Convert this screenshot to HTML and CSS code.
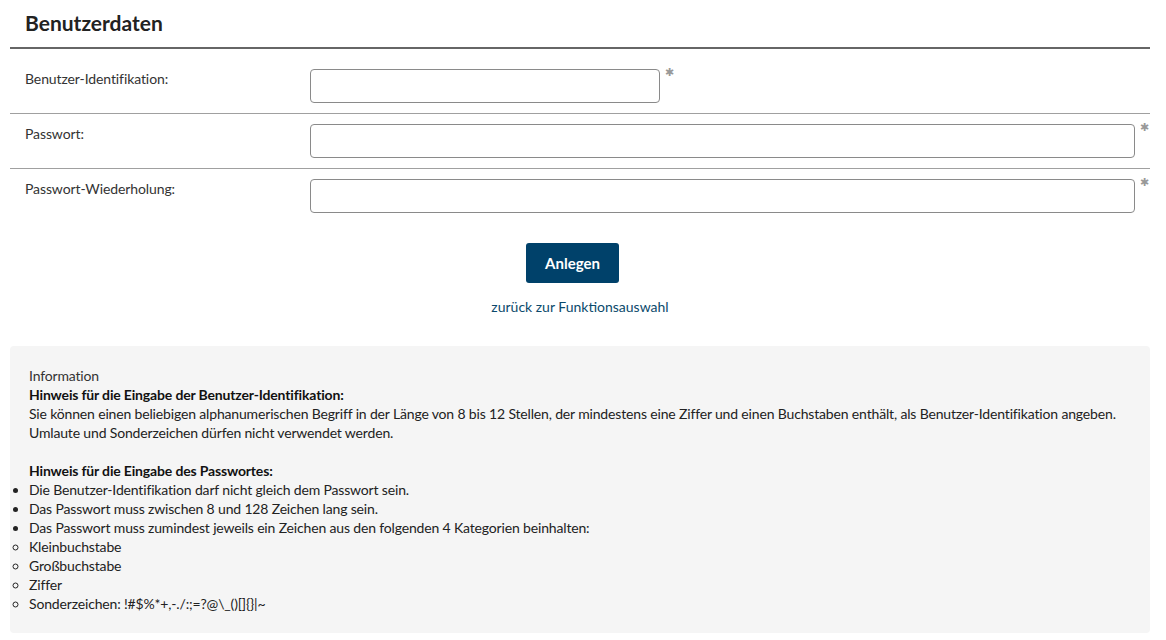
FILE: index.html
```html
<!DOCTYPE html>
<html lang="de">
<head>
  <meta charset="UTF-8">
  <title>Benutzerdaten</title>
  <link rel="stylesheet" href="styles.css">
</head>
<body>
  <div class="page">
    <h2 class="title">Benutzerdaten</h2>

    <form class="form" onsubmit="return false">
      <div class="row first">
        <label for="userId">Benutzer-Identifikation:</label>
        <div class="field">
          <input type="text" id="userId" class="short">
          <span class="req">&#10033;</span>
        </div>
      </div>
      <div class="row">
        <label for="pw">Passwort:</label>
        <div class="field">
          <input type="password" id="pw">
          <span class="req">&#10033;</span>
        </div>
      </div>
      <div class="row last">
        <label for="pw2">Passwort-Wiederholung:</label>
        <div class="field">
          <input type="password" id="pw2">
          <span class="req">&#10033;</span>
        </div>
      </div>

      <div class="actions">
        <button type="submit">Anlegen</button>
        <a href="#" class="back">zurück zur Funktionsauswahl</a>
      </div>
    </form>

    <div class="info">
      <p class="info-title">Information</p>
      <p><strong>Hinweis für die Eingabe der Benutzer-Identifikation:</strong><br>
      Sie können einen beliebigen alphanumerischen Begriff in der Länge von 8 bis 12 Stellen, der mindestens eine Ziffer und einen Buchstaben enthält, als Benutzer-Identifikation angeben.<br>
      Umlaute und Sonderzeichen dürfen nicht verwendet werden.</p>

      <p class="gap"><strong>Hinweis für die Eingabe des Passwortes:</strong></p>
      <ul>
        <li>Die Benutzer-Identifikation darf nicht gleich dem Passwort sein.</li>
        <li>Das Passwort muss zwischen 8 und 128 Zeichen lang sein.</li>
        <li>Das Passwort muss zumindest jeweils ein Zeichen aus den folgenden 4 Kategorien beinhalten:
          <ul>
            <li>Kleinbuchstabe</li>
            <li>Großbuchstabe</li>
            <li>Ziffer</li>
            <li>Sonderzeichen: !#$%*+,-./:;=?@\_()[]{}|~</li>
          </ul>
        </li>
      </ul>
    </div>
  </div>
</body>
</html>
```

FILE: styles.css
```css
body {
  margin: 0;
  font-family: Lato, "Open Sans", sans-serif;
  font-size: 14px;
  color: #222;
  background-color: #fff;
}
.page {
  width: 1140px;
  margin-left: 10px;
}
.title {
  margin: 0;
  padding: 11px 15px 12px;
  font-size: 21px;
  line-height: 24px;
  font-weight: bold;
  color: #222;
  border-bottom: 2px solid #666;
}
.row {
  display: flex;
  align-items: flex-start;
  padding: 10px 0;
  border-bottom: 1px solid #a0a0a0;
}
.row.first {
  padding-top: 20px;
}
.row.last {
  border-bottom: none;
}
.row label {
  width: 300px;
  padding-left: 15px;
  box-sizing: border-box;
  line-height: 20px;
  color: #333;
  letter-spacing: -0.1px;
}
.field {
  flex: 1;
  display: flex;
  align-items: flex-start;
}
.field input {
  flex: 1;
  height: 34px;
  box-sizing: border-box;
  border: 1px solid #8a8a8a;
  border-radius: 4px;
  padding: 4px 8px;
  font-family: inherit;
  font-size: 14px;
}
.field input.short {
  flex: none;
  width: 350px;
}
.req {
  width: 15px;
  box-sizing: border-box;
  margin-top: -4px;
  padding-left: 5px;
  font-size: 11px;
  color: #999;
}
.actions {
  display: flex;
  flex-direction: column;
  align-items: center;
  padding-top: 20px;
}
.actions button {
  width: 93px;
  height: 40px;
  margin-right: 15px;
  background-color: #00416a;
  border: none;
  border-radius: 3px;
  color: #fff;
  font-family: inherit;
  font-size: 15px;
  font-weight: bold;
  cursor: pointer;
}
.back {
  margin-top: 15px;
  line-height: 18px;
  color: #0b4a6c;
  text-decoration: none;
}
.info {
  margin-top: 30px;
  padding: 20px 19px 20px;
  background-color: #f5f5f5;
  border-radius: 4px;
  line-height: 19px;
  letter-spacing: -0.16px;
}
.info p {
  margin: 0;
}
.info .info-title {
  color: #333;
}
.info strong {
  color: #111;
}
.info .gap {
  margin-top: 19px;
}
.info ul {
  margin: 0;
  padding: 0;
  list-style: disc;
}
.info ul ul {
  list-style: circle;
}
```
